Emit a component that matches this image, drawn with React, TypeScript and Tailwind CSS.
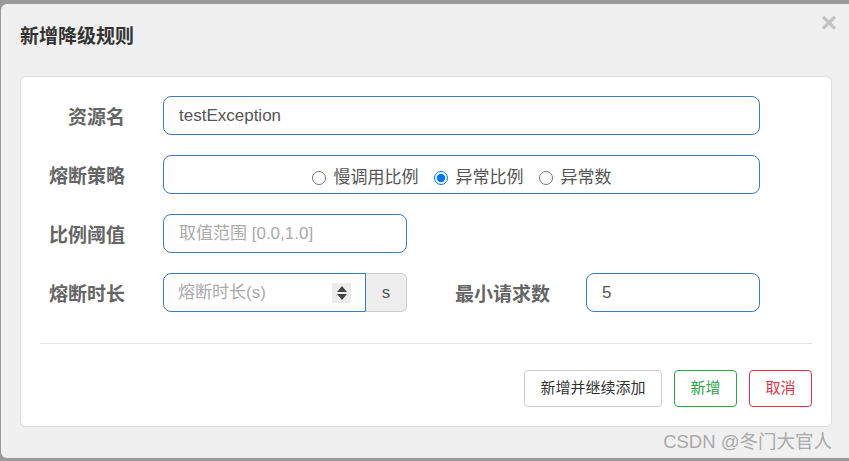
import React from 'react'

const font = { fontFamily: '"Liberation Sans", "Noto Sans CJK SC", sans-serif' }

function Label({ children, className = '' }: { children: React.ReactNode; className?: string }) {
  return <div className={`text-[19px] font-bold text-[#666] leading-none pt-[4px] ${className}`}>{children}</div>
}

function Spinner() {
  return (
    <div className="w-[19px] h-[20px] bg-[#ececec] flex flex-col items-center justify-center gap-[2px]">
      <svg width="10" height="6" viewBox="0 0 10 6"><path d="M5 0 L10 6 L0 6 Z" fill="#444" /></svg>
      <svg width="10" height="6" viewBox="0 0 10 6"><path d="M0 0 L10 0 L5 6 Z" fill="#444" /></svg>
    </div>
  )
}

export default function App() {
  return (
    <div className="w-[849px] h-[461px] bg-[#999] overflow-hidden pt-[4px] pl-[1px] pb-[3px]" style={font}>
      <div className="w-[860px] h-full bg-[#f0f0f0] rounded-md flex flex-col">
        {/* Header */}
        <div className="h-[72px] flex items-start">
          <div className="pl-[19px] pt-[21px] text-[19px] leading-6 font-bold text-[#333] flex-1">新增降级规则</div>
          <div className="w-[40px] mr-[12px] pt-[5px] text-[28px] leading-[28px] font-bold text-[#c2c2c2] text-center">×</div>
        </div>

        {/* Body panel */}
        <div className="ml-[19px] w-[812px] h-[351px] bg-white border border-[#ddd] rounded-md px-[19px] pt-[19px] flex flex-col">
          <div className="flex flex-col gap-[20px]">
            {/* 资源名 */}
            <div className="flex items-center">
              <Label className="w-[85px] text-right">资源名</Label>
              <div className="ml-[38px] w-[597px] h-[39px] border border-[#3a7cbf] rounded-lg flex items-center px-[15px] text-[17px] text-[#555]">
                testException
              </div>
            </div>

            {/* 熔断策略 */}
            <div className="flex items-center">
              <Label className="w-[85px] text-right">熔断策略</Label>
              <div className="ml-[38px] w-[597px] h-[39px] border border-[#3a7cbf] rounded-lg flex items-center justify-center pt-[6px] text-[17px] text-[#555]">
                <label className="flex items-center gap-[8px] mr-[15px]">
                  <input type="radio" name="grade" className="w-[14px] h-[14px] m-0" />
                  <span>慢调用比例</span>
                </label>
                <label className="flex items-center gap-[8px] mr-[15px]">
                  <input type="radio" name="grade" defaultChecked className="w-[14px] h-[14px] m-0" />
                  <span>异常比例</span>
                </label>
                <label className="flex items-center gap-[8px]">
                  <input type="radio" name="grade" className="w-[14px] h-[14px] m-0" />
                  <span>异常数</span>
                </label>
              </div>
            </div>

            {/* 比例阈值 */}
            <div className="flex items-center">
              <Label className="w-[85px] text-right">比例阈值</Label>
              <div className="ml-[38px] w-[244px] h-[39px] border border-[#3a7cbf] rounded-lg flex items-center px-[15px] text-[17px] text-[#aaa]">
                取值范围 [0.0,1.0]
              </div>
            </div>

            {/* 熔断时长 + 最小请求数 */}
            <div className="flex items-center">
              <Label className="w-[85px] text-right">熔断时长</Label>
              <div className="ml-[38px] w-[244px] h-[39px] flex">
                <div className="w-[203px] h-full border border-[#3a7cbf] rounded-l-lg flex items-center pl-[14px] pr-[14px] text-[17px] text-[#aaa]">
                  <span className="flex-1">熔断时长(s)</span>
                  <Spinner />
                </div>
                <div className="flex-1 h-full border border-l-0 border-[#ccc] bg-[#eee] rounded-r-md flex items-center justify-center text-[17px] text-[#555]">
                  s
                </div>
              </div>
              <Label className="ml-[48px] w-[96px] text-left">最小请求数</Label>
              <div className="ml-[35px] w-[174px] h-[39px] border border-[#3a7cbf] rounded-lg flex items-center px-[15px] text-[17px] text-[#555]">
                5
              </div>
            </div>
          </div>

          <div className="mt-[31px] h-px bg-[#e5e5e5]" />

          <div className="mt-[26px] flex justify-end gap-[12px] text-[15px]">
            <button className="w-[138px] h-[37px] border border-[#ccc] rounded bg-white text-[#333]">新增并继续添加</button>
            <button className="w-[63px] h-[37px] border border-[#28a745] rounded bg-white text-[#28a745]">新增</button>
            <button className="w-[63px] h-[37px] border border-[#dc3545] rounded bg-white text-[#dc3545]">取消</button>
          </div>
        </div>

        {/* Watermark */}
        <div className="w-[831px] text-right text-[18.5px] leading-[30px] text-[#aaa]">CSDN @冬门大官人</div>
      </div>
    </div>
  )
}
